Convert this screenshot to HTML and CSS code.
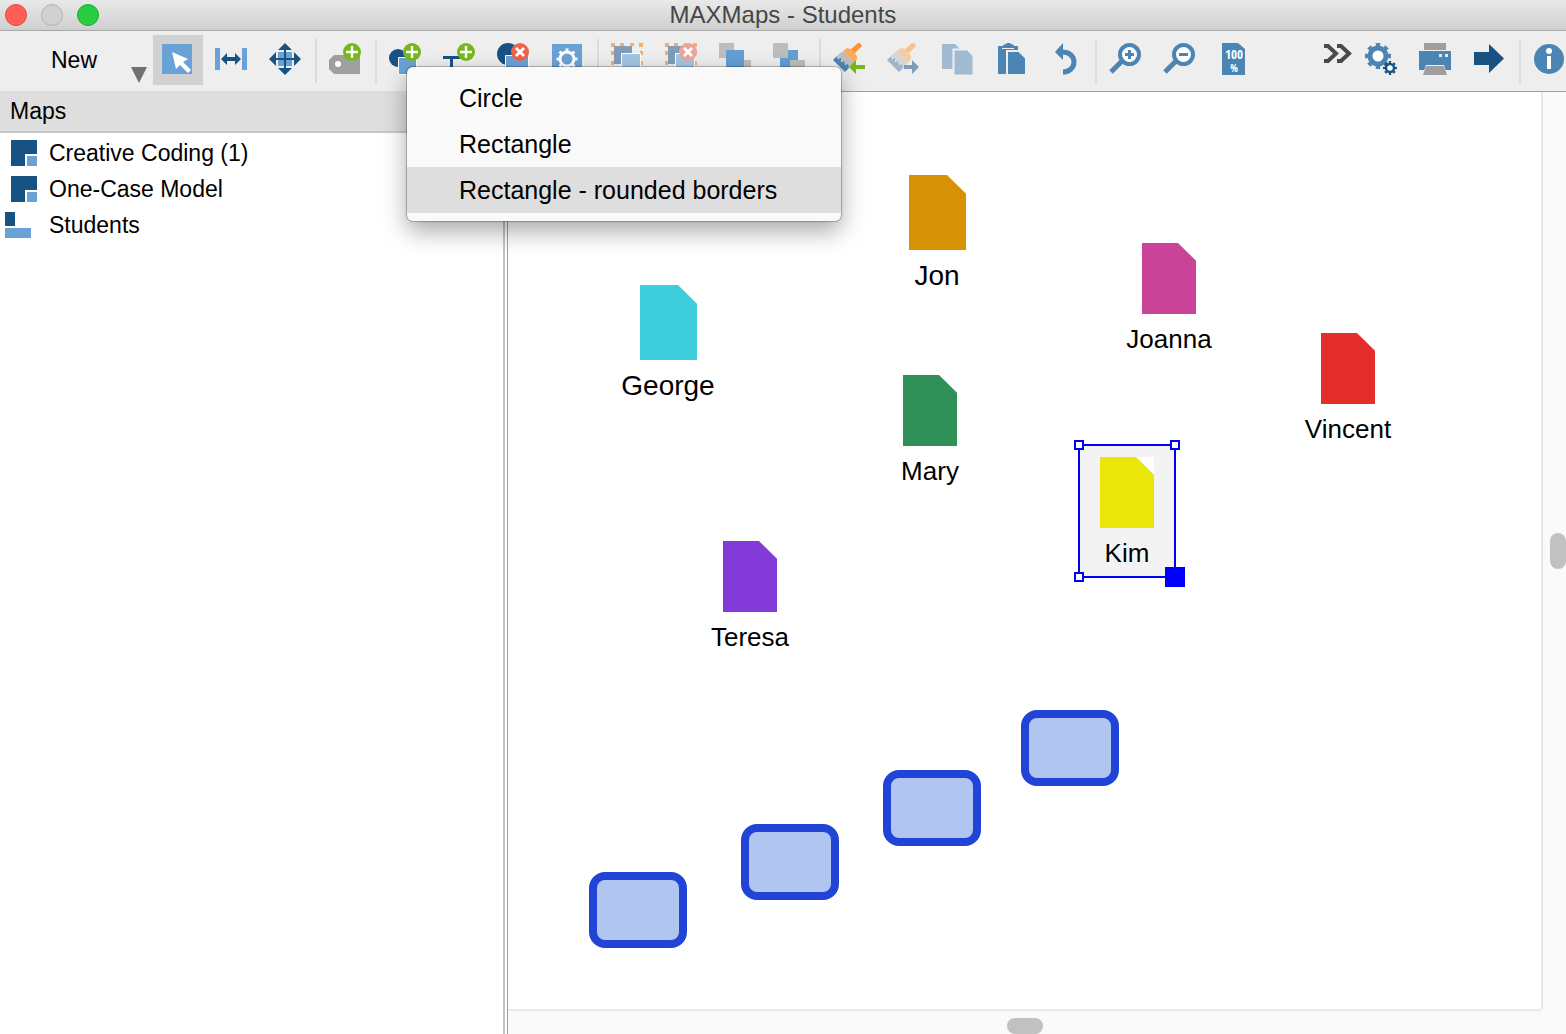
FILE: index.html
```html
<!DOCTYPE html>
<html lang="en">
<head>
  <meta charset="UTF-8">
  <meta name="viewport" content="width=device-width, initial-scale=1.0">
  <title>MAXMaps - Students</title>
  <link rel="stylesheet" href="styles.css">
</head>
<body>
  <!-- shared icon parts -->
  <svg class="sprite" aria-hidden="true">
    <symbol id="badge-add" viewBox="0 0 18 18">
      <circle cx="9" cy="9" r="9" fill="#76b81c"/>
      <path d="M9 3v12M3 9h12" stroke="#fff" stroke-width="2.4"/>
    </symbol>
    <symbol id="badge-remove" viewBox="0 0 18 18">
      <circle cx="9" cy="9" r="9" fill="#f0624a"/>
      <path d="M5 5l8 8M13 5l-8 8" stroke="#fff" stroke-width="2.8"/>
    </symbol>
    <symbol id="brush" viewBox="0 0 32 32">
      <path d="M16 8l9-8h2l2 3-8 8z" fill="#fa9534"/>
      <path d="M10 8l4-3 4 1 6 7v3l-3 4z" fill="#fcab5c"/>
      <path d="M10 8l11 11-5 6L4 13z" fill="#bdbdbd"/>
      <path d="M4 13l1 3 3-1 0 4 3-1 1 4 3-1 1 4-4 4L0 17z" fill="#4c84b4"/>
    </symbol>
    <symbol id="doc" viewBox="0 0 54 72" preserveAspectRatio="none">
      <path d="M0 0h36l18 18v54H0z" fill="currentColor"/>
    </symbol>
    <symbol id="map" viewBox="0 0 32 26">
      <path d="M6 0h26v14H20v12H6z" fill="#175282"/>
      <path d="M22 16h10v10H22z" fill="#6aa2d6"/>
    </symbol>
  </svg>

  <header class="titlebar">
    <div class="window-buttons">
      <button class="window-button close" aria-label="Close"></button>
      <button class="window-button minimize" aria-label="Minimize"></button>
      <button class="window-button maximize" aria-label="Zoom"></button>
    </div>
    <h1>MAXMaps - Students</h1>
  </header>

  <nav class="toolbar">
    <button class="new-button"><span>New</span><i class="caret"></i></button>
    <button class="tool active" aria-label="Select">
      <svg viewBox="0 0 32 32"><path d="M1 1h30v30H1z" fill="#6aa2d6"/><path d="M11 9l16 7-5 3 8 8-3 3-8-8-4 4z" fill="#fff"/></svg>
    </button>
    <button class="tool" aria-label="Fit width">
      <svg viewBox="0 0 32 32"><path d="M0 5h5v22H0zM27 5h5v22h-5z" fill="#6aa2d6"/><path d="M6 16l6-6v4h8v-4l6 6-6 6v-4h-8v4z" fill="#175282"/></svg>
    </button>
    <button class="tool" aria-label="Move">
      <svg viewBox="0 0 32 32"><path d="M9 9h14v14H9z" fill="#6aa2d6"/><path d="M16 0l7 7H9zM16 32l7-7H9zM0 16l7-7v14zM32 16l-7-7v14z" fill="#175282"/><path d="M16 5v22M5 16h22" stroke="#175282" stroke-width="2"/></svg>
    </button>
    <span class="separator"></span>
    <button class="tool" aria-label="New code">
      <svg viewBox="0 0 32 32"><path d="M5 12h26v19H5l-5-5v-9z" fill="#9f9f9f"/><circle cx="9" cy="21" r="3" fill="#fff"/><use href="#badge-add" x="14" y="0" width="18" height="18"/></svg>
    </button>
    <span class="separator"></span>
    <div class="dropdown">
      <button class="tool" aria-label="New shape" aria-haspopup="menu" aria-expanded="true">
        <svg viewBox="0 0 32 32"><circle cx="9" cy="15" r="9" fill="#175282"/><path d="M9.500 14.500h18v17h-18z" fill="#6aa2d6" stroke="#fff"/><use href="#badge-add" x="14" y="0" width="18" height="18"/></svg>
      </button>
      <div class="menu" role="menu">
        <button role="menuitem">Circle</button>
        <button role="menuitem">Rectangle</button>
        <button role="menuitem" class="highlighted">Rectangle - rounded borders</button>
      </div>
    </div>
    <button class="tool" aria-label="New text">
      <svg viewBox="0 0 32 32"><path d="M0 13h17v3h-7v15H7V16H0z" fill="#175282"/><use href="#badge-add" x="14" y="0" width="18" height="18"/></svg>
    </button>
    <button class="tool" aria-label="Remove shape">
      <svg viewBox="0 0 32 32"><circle cx="11" cy="11" r="11" fill="#175282"/><path d="M8.500 12.500h23v19h-23z" fill="#6aa2d6" stroke="#fff"/><use href="#badge-remove" x="14" y="0" width="18" height="18"/></svg>
    </button>
    <button class="tool" aria-label="Properties">
      <svg viewBox="0 0 32 32"><path d="M1 1h30v30H1z" fill="#6aa2d6"/><g fill="none" stroke="#fff"><circle cx="16" cy="16" r="7" stroke-width="3"/><circle cx="16" cy="16" r="9" stroke-width="3" pathLength="80" stroke-dasharray="4 6" stroke-dashoffset="2"/></g></svg>
    </button>
    <span class="separator"></span>
    <button class="tool" aria-label="Group" disabled>
      <svg viewBox="0 0 32 32"><path d="M0 0h4v4H0zM9 0h4v3H9zM19 0h4v3h-4zM28 0h4v4h-4zM0 8h3v4H0zM0 18h3v4H0zM29 8h3v4h-3zM29 18h3v4h-3zM0 28h4v4H0zM28 28h4v4h-4z" fill="#f2ae70"/><path d="M3 3h18v18H3z" fill="#7f9cb8"/><path d="M10.500 10.500h19v19h-19z" fill="#a3c5e5" stroke="#fff"/></svg>
    </button>
    <button class="tool" aria-label="Ungroup" disabled>
      <svg viewBox="0 0 32 32"><path d="M0 0h4v4H0zM9 0h4v3H9zM19 0h4v3h-4zM28 0h4v4h-4zM0 8h3v4H0zM0 18h3v4H0zM29 8h3v4h-3zM29 18h3v4h-3zM0 28h4v4H0zM28 28h4v4h-4z" fill="#f2ae70"/><path d="M3 3h18v18H3z" fill="#7f9cb8"/><path d="M10.500 10.500h19v19h-19z" fill="#a3c5e5" stroke="#fff"/><circle cx="23" cy="9" r="9" fill="#eda59a"/><path d="M19 5l8 8M27 5l-8 8" stroke="#fff" stroke-width="2.800"/></svg>
    </button>
    <button class="tool" aria-label="Bring to front">
      <svg viewBox="0 0 32 32"><path d="M0 0h15v15H0zM17 17h15v15H17z" fill="#bdbdbd"/><path d="M7 7h18v18H7z" fill="#649fd4"/></svg>
    </button>
    <button class="tool" aria-label="Send to back">
      <svg viewBox="0 0 32 32"><path d="M7 7h18v18H7z" fill="#649fd4"/><path d="M0 0h15v15H0zM17 17h15v15H17z" fill="#bdbdbd"/></svg>
    </button>
    <span class="separator"></span>
    <button class="tool" aria-label="Copy format">
      <svg viewBox="0 0 32 32"><use href="#brush" width="32" height="32"/><path d="M16 24l7-7v5h9v4h-9v5z" fill="#76b81c"/></svg>
    </button>
    <button class="tool" aria-label="Apply format" disabled>
      <svg viewBox="0 0 32 32"><use href="#brush" width="32" height="32" opacity="0.5"/><path d="M32 24l-7-7v5h-8v4h8v5z" fill="#7f9cb8"/></svg>
    </button>
    <button class="tool" aria-label="Copy" disabled>
      <svg viewBox="0 0 32 32" fill="#a0bad2"><path d="M1 1h13l4 4v21H1z"/><path d="M12.500 6.500h14l6 6v20h-20z" stroke="#eee" stroke-width="2"/></svg>
    </button>
    <button class="tool" aria-label="Paste">
      <svg viewBox="0 0 32 32" fill="#4c84b4"><path d="M3 3h20v28H3z"/><path d="M7 5h12v1H7z" fill="#eee"/><path d="M8 5V2l3-1 1-1h3l1 1 3 1v3z"/><path d="M12 8h12l7 7v17H12z" stroke="#eee" stroke-width="2"/></svg>
    </button>
    <button class="tool" aria-label="Undo">
      <svg viewBox="0 0 32 32"><path d="M6 9l8-9v17z" fill="#4c84b4"/><path d="M13 9c7 0 12 4 12 10s-5 10-11 10" fill="none" stroke="#4c84b4" stroke-width="5"/></svg>
    </button>
    <span class="separator"></span>
    <button class="tool" aria-label="Zoom in">
      <svg viewBox="0 0 32 32"><path d="M14 17L2 29" stroke="#4c84b4" stroke-width="5"/><circle cx="20.500" cy="11.500" r="9.500" fill="#fff" stroke="#4c84b4" stroke-width="4"/><path d="M20.500 7v9M16 11.500h9" stroke="#4c84b4" stroke-width="3"/></svg>
    </button>
    <button class="tool" aria-label="Zoom out">
      <svg viewBox="0 0 32 32"><path d="M14 17L2 29" stroke="#4c84b4" stroke-width="5"/><circle cx="20.500" cy="11.500" r="9.500" fill="#fff" stroke="#4c84b4" stroke-width="4"/><path d="M16 11.500h9" stroke="#4c84b4" stroke-width="3"/></svg>
    </button>
    <button class="tool" aria-label="Zoom 100 %">
      <svg viewBox="0 0 32 32"><path d="M5 0h16l7 6v26H5z" fill="#4c84b4"/><text x="17" y="16" class="zoom-label">100</text><text x="17" y="29" class="zoom-label percent">%</text></svg>
    </button>
    <span class="spacer"></span>
    <button class="tool more" aria-label="More tools">
      <svg viewBox="0 0 32 32" fill="none" stroke="#4a4a48" stroke-width="4"><path d="M1 3h4l8 7.500L5 18H1M14 3h4l8 7.500L18 18h-4"/></svg>
    </button>
    <button class="tool" aria-label="Settings">
      <svg viewBox="0 0 32 32">
        <circle cx="13" cy="13" r="8" fill="#fff" stroke="#4c84b4" stroke-width="5"/>
        <circle cx="13" cy="13" r="11" fill="none" stroke="#4c84b4" stroke-width="4" pathLength="80" stroke-dasharray="5 5" stroke-dashoffset="2.500"/>
        <circle cx="25" cy="25" r="4" fill="#fff" stroke="#175282" stroke-width="2.500"/>
        <circle cx="25" cy="25" r="6" fill="none" stroke="#175282" stroke-width="2" pathLength="80" stroke-dasharray="5 5" stroke-dashoffset="2.500"/>
      </svg>
    </button>
    <button class="tool" aria-label="Print">
      <svg viewBox="0 0 32 32"><path d="M5 0h22v7H5z" fill="#9f9f9f"/><path d="M0 8h32v19H0z" fill="#4c84b4"/><path d="M20 11h3v3h-3zM26 11h3v3h-3z" fill="#dce8f2"/><path d="M7 22h18l4 11H3z" fill="#eee"/><path d="M7 23h18l3 9H4z" fill="#9f9f9f"/></svg>
    </button>
    <button class="tool" aria-label="Export">
      <svg viewBox="0 0 32 32"><path d="M1 9h15V1l15 14.500L16 30v-8H1z" fill="#175282"/></svg>
    </button>
    <span class="separator"></span>
    <button class="tool last" aria-label="Info">
      <svg viewBox="0 0 32 32"><circle cx="16" cy="16" r="15" fill="#4c84b4"/><circle cx="16" cy="8" r="3" fill="#fff"/><path d="M14 13h4v13h-4z" fill="#fff"/></svg>
    </button>
  </nav>

  <div class="workspace">
    <aside class="sidebar">
      <h2>Maps</h2>
      <ul class="map-list">
        <li><a href="#creative-coding"><svg><use href="#map"/></svg>Creative Coding (1)</a></li>
        <li><a href="#one-case"><svg><use href="#map"/></svg>One-Case Model</a></li>
        <li><a href="#students"><svg viewBox="0 0 32 26"><path d="M0 0h10v14H0z" fill="#175282"/><path d="M0 16h26v10H0z" fill="#6aa2d6"/></svg>Students</a></li>
      </ul>
    </aside>

    <main class="map-pane">
      <div class="canvas">
        <div class="node large jon"><svg><use href="#doc"/></svg>Jon</div>
        <div class="node large george"><svg><use href="#doc"/></svg>George</div>
        <div class="node joanna"><svg><use href="#doc"/></svg>Joanna</div>
        <div class="node vincent"><svg><use href="#doc"/></svg>Vincent</div>
        <div class="node mary"><svg><use href="#doc"/></svg>Mary</div>
        <div class="node teresa"><svg><use href="#doc"/></svg>Teresa</div>
        <div class="node kim selected"><svg><use href="#doc"/></svg>Kim
          <i class="handle top-left"></i>
          <i class="handle top-right"></i>
          <i class="handle bottom-left"></i>
          <i class="handle bottom-right"></i>
        </div>
        <div class="shape shape-1"></div>
        <div class="shape shape-2"></div>
        <div class="shape shape-3"></div>
        <div class="shape shape-4"></div>
      </div>
      <div class="scrollbar vertical"><span class="thumb"></span></div>
      <div class="scrollbar horizontal"><span class="thumb"></span></div>
    </main>
  </div>
</body>
</html>
```
FILE: styles.css
```css
* {
  box-sizing: border-box;
}
body {
  margin: 0;
  height: 100vh;
  display: flex;
  flex-direction: column;
  overflow: hidden;
  background: #fff;
  color: #000;
  font-family: "Liberation Sans", Arial, sans-serif;
  font-size: 23px;
}
button {
  margin: 0;
  padding: 0;
  border: none;
  background: none;
  color: inherit;
  font: inherit;
}
.sprite {
  position: absolute;
  width: 0;
  height: 0;
}

/* title bar */
.titlebar {
  display: grid;
  grid-template-columns: 1fr auto 1fr;
  align-items: center;
  height: 31px;
  padding: 0 5px;
  background: linear-gradient(#e9e9e9, #cfcfcf);
  border-bottom: 1px solid #a8a8a8;
}
.titlebar h1 {
  margin: 0;
  font-size: 24px;
  line-height: 30px;
  font-weight: normal;
  color: #464646;
}
.window-buttons {
  display: flex;
  gap: 14px;
}
.window-button {
  width: 22px;
  height: 22px;
  border: 1px solid #b3b3b3;
  border-radius: 50%;
  background: #d0d0d0;
}
.window-button.close {
  background: #ff5f57;
  border-color: #e2463f;
}
.window-button.maximize {
  background: #28cd41;
  border-color: #1bac2c;
}

/* toolbar */
.toolbar {
  display: flex;
  gap: 4px;
  height: 60px;
  padding-top: 4px;
  background: #eee;
}
.new-button {
  display: flex;
  justify-content: flex-end;
  align-items: center;
  gap: 34px;
  width: 149px;
  height: 50px;
  padding-right: 2px;
}
.caret {
  align-self: flex-end;
  margin-bottom: 2px;
  border: 8px solid transparent;
  border-top: 16px solid #70706e;
  border-bottom: none;
}
.tool {
  display: block;
  flex: none;
  width: 50px;
  height: 50px;
  padding: 8px 10px 10px 8px;
}
.tool.active {
  background: #d1d1d1;
}
.tool.more {
  width: 36px;
  padding: 8px 0 10px 6px;
}
.tool.last {
  width: 41px;
  padding-right: 1px;
}
.tool svg {
  display: block;
  width: 32px;
  height: 32px;
}
.zoom-label {
  font-family: "Liberation Sans Narrow", "Open Sans Condensed", Roboto, sans-serif;
  font-size: 13px;
  font-weight: bold;
  fill: #fff;
  text-anchor: middle;
}
.zoom-label.percent {
  font-size: 10px;
}
.separator {
  flex: none;
  width: 2px;
  height: 44px;
  margin-top: 4px;
  background: #dcdcdc;
}
.spacer {
  flex: 1;
}

/* shape menu, opens over the map */
.dropdown {
  position: relative;
}
.menu {
  position: absolute;
  top: 32px;
  left: 26px;
  z-index: 10;
  width: 434px;
  padding: 8px 0;
  background: #f9f9f9;
  border-radius: 6px;
  box-shadow: 0 0 1px 1px rgba(0, 0, 0, 0.25), 0 10px 24px rgba(0, 0, 0, 0.35);
}
.menu button {
  display: block;
  width: 100%;
  height: 46px;
  padding: 0 52px;
  font-size: 25px;
  text-align: left;
  white-space: nowrap;
}
.menu .highlighted {
  background: #dedede;
}

/* sidebar */
.workspace {
  flex: 1;
  display: flex;
  min-height: 0;
}
.sidebar {
  flex: none;
  width: 505px;
  border-right: 2px solid #c4c4c4;
}
.sidebar h2 {
  margin: 0;
  height: 42px;
  padding-left: 10px;
  background: #dedede;
  border-bottom: 2px solid #c8c8c8;
  font-size: 23px;
  line-height: 40px;
  font-weight: normal;
}
.map-list {
  margin: 0;
  padding: 2px 0;
  list-style: none;
}
.map-list a {
  display: flex;
  align-items: center;
  gap: 12px;
  height: 36px;
  padding-left: 5px;
  color: inherit;
  text-decoration: none;
}
.map-list svg {
  width: 32px;
  height: 26px;
}

/* map */
.map-pane {
  flex: 1;
  display: grid;
  grid-template: 1fr 25px / 1fr 25px;
  margin-left: 2px;
  background: #fafafa;
  border-top: 1px solid #a0a0a0;
  border-left: 1px solid #a0a0a0;
}
.canvas {
  position: relative;
  background: #fff;
}
.node {
  position: absolute;
  display: flex;
  flex-direction: column;
  align-items: center;
  gap: 10px;
  width: 98px;
  font-size: 26px;
  line-height: 30px;
  -webkit-text-fill-color: #000;
}
.node svg {
  width: 54px;
  height: 71px;
}
.node.large {
  gap: 11px;
  font-size: 28px;
}
.node.large svg {
  width: 57px;
  height: 75px;
}
.jon {
  left: 380px;
  top: 83px;
  color: #d79105;
}
.george {
  left: 111px;
  top: 193px;
  color: #3ecddb;
}
.joanna {
  left: 612px;
  top: 151px;
  color: #c94499;
}
.vincent {
  left: 791px;
  top: 241px;
  color: #e32e2b;
}
.mary {
  left: 373px;
  top: 283px;
  color: #2f9158;
}
.teresa {
  left: 193px;
  top: 449px;
  color: #823ad9;
}
.kim {
  left: 570px;
  top: 352px;
  color: #ebe60a;
}
.node.selected {
  height: 134px;
  padding-top: 11px;
  background: #f3f3f3;
  border: 2px solid #0000f5;
}
.node.selected svg {
  background: #fff;
}
.handle {
  position: absolute;
  width: 10px;
  height: 10px;
  background: #fff;
  border: 2px solid #0000f5;
}
.top-left {
  left: -6px;
  top: -6px;
}
.top-right {
  right: -6px;
  top: -6px;
}
.bottom-left {
  left: -6px;
  bottom: -6px;
}
.bottom-right {
  right: -11px;
  bottom: -11px;
  width: 20px;
  height: 20px;
  background: #0000fe;
}
.shape {
  position: absolute;
  width: 98px;
  height: 76px;
  background: #b0c6f1;
  border: 8px solid #2144d6;
  border-radius: 16px;
}
.shape-1 {
  left: 81px;
  top: 780px;
}
.shape-2 {
  left: 233px;
  top: 732px;
}
.shape-3 {
  left: 375px;
  top: 678px;
}
.shape-4 {
  left: 513px;
  top: 618px;
}
.scrollbar {
  display: flex;
  align-items: center;
  justify-content: center;
}
.scrollbar.vertical {
  justify-content: flex-end;
  border-left: 2px solid #e8e8e8;
}
.scrollbar.horizontal {
  align-items: flex-end;
  border-top: 2px solid #e8e8e8;
}
.thumb {
  border-radius: 8px;
  background: #c1c1c1;
}
.vertical .thumb {
  width: 16px;
  height: 36px;
}
.horizontal .thumb {
  width: 36px;
  height: 16px;
}
```
